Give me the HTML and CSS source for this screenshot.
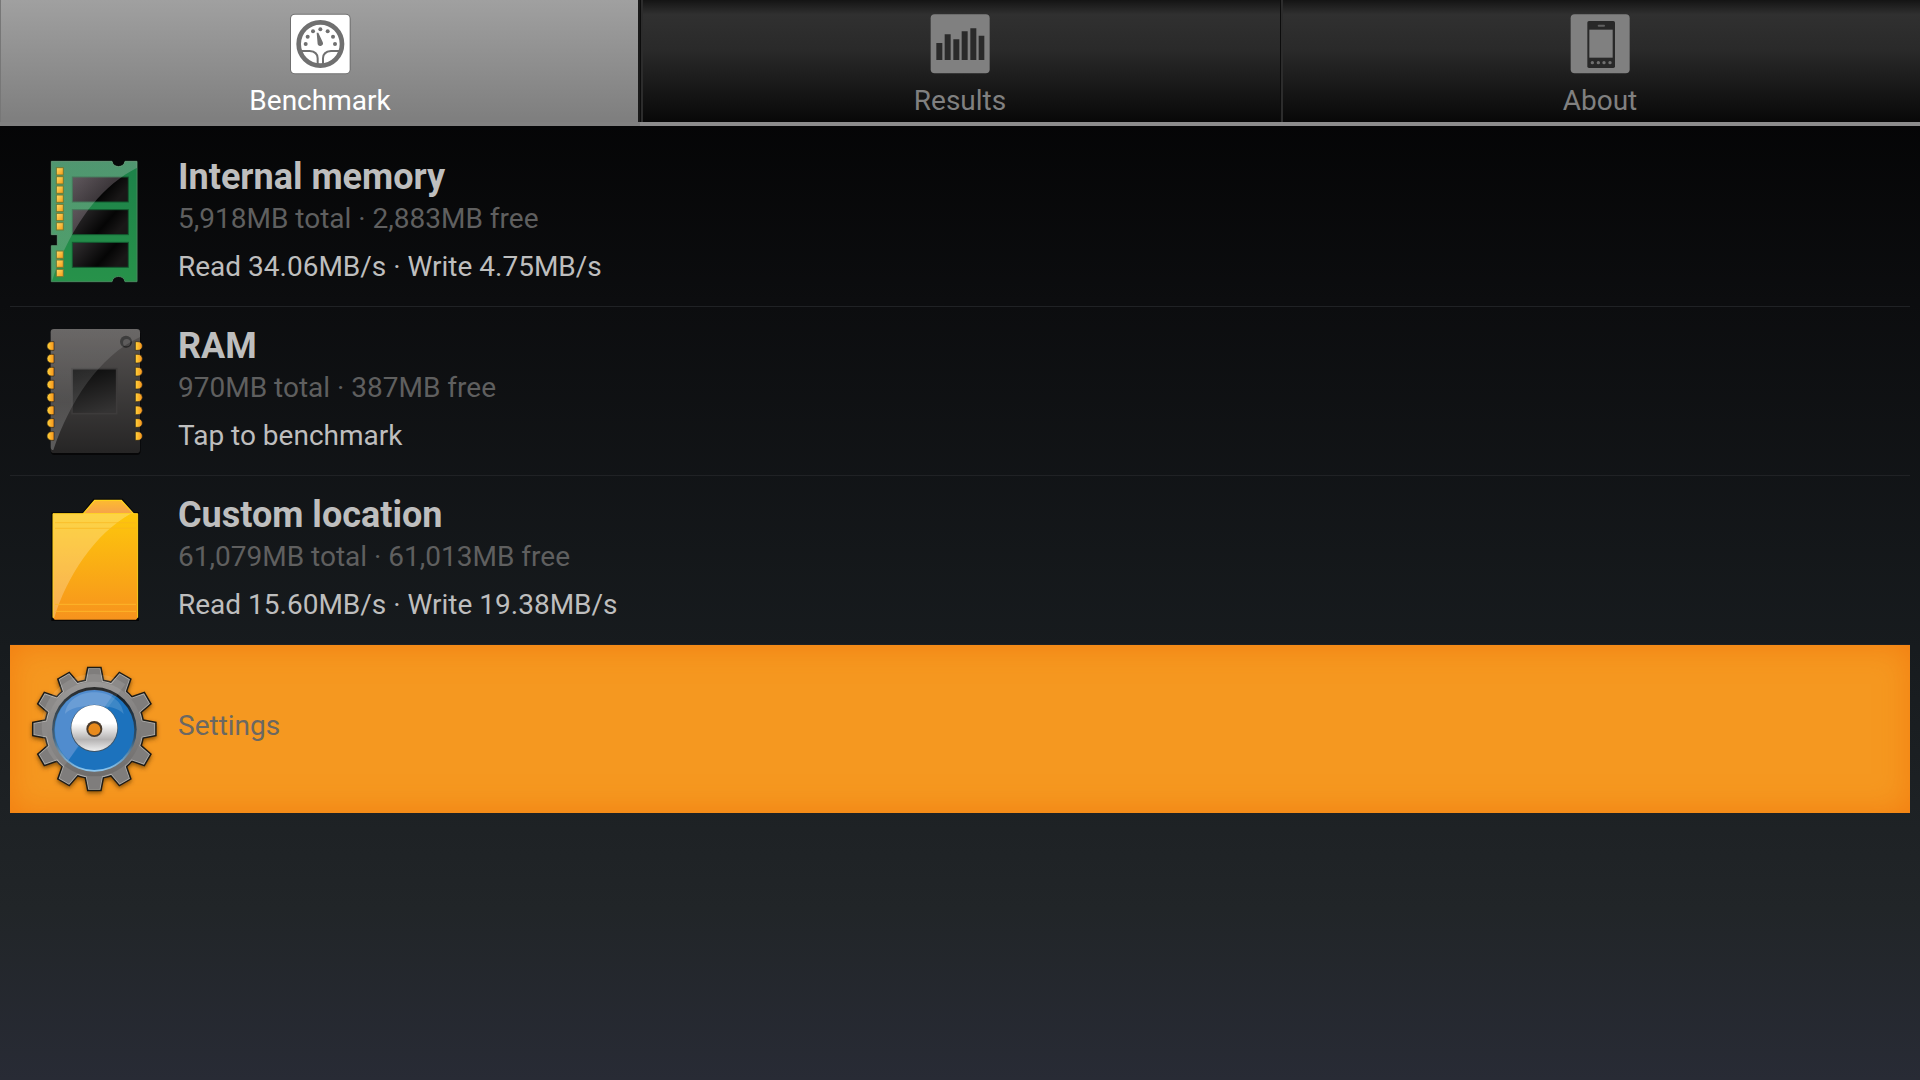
FILE: index.html
```html
<!DOCTYPE html>
<html lang="en">
<head>
    <meta charset="UTF-8">
    <meta name="viewport" content="width=device-width, initial-scale=1.0">
    <title>Benchmark</title>
    <link rel="stylesheet" href="styles.css">
</head>
<body>

<nav class="tabs">
    <button type="button" class="tab active">
        <svg class="tab-icon" viewBox="200 30 198 198" aria-hidden="true">
            <rect x="209" y="41" width="182" height="182" rx="15" fill="#6f6f6f"/>
            <rect x="212" y="44" width="176" height="176" rx="12" fill="#fff"/>
            <circle cx="300" cy="132" r="65" fill="none" stroke="#707070" stroke-width="14"/>
            <g fill="#707070">
                <circle cx="256" cy="132" r="6"/>
                <circle cx="262" cy="110" r="6"/>
                <circle cx="278" cy="94" r="6"/>
                <circle cx="300" cy="88" r="6"/>
                <circle cx="322" cy="94" r="6"/>
                <circle cx="338" cy="110" r="6"/>
                <circle cx="344" cy="132" r="6"/>
                <path d="M289 98 L294 98 L307 126 A8 8 0 1 1 292 133 Z"/>
            </g>
            <path d="M243 153 H268 Q292 155 292 175 V192 M357 153 H332 Q308 155 308 175 V192" fill="none" stroke="#707070" stroke-width="6"/>
        </svg>
        <span>Benchmark</span>
    </button>
    <button type="button" class="tab">
        <svg class="tab-icon" viewBox="200 30 198 198" aria-hidden="true">
            <rect x="211" y="43" width="177" height="177" rx="12" fill="#808080"/>
            <path d="M228 129h18v51h-18z M253 103h18v77h-18z M279 118h18v62h-18z M304 94h18v86h-18z M330 85h18v95h-18z M355 107h17v73h-17z" fill="#2a2a2a"/>
        </svg>
        <span>Results</span>
    </button>
    <button type="button" class="tab">
        <svg class="tab-icon" viewBox="200 30 198 198" aria-hidden="true">
            <rect x="211" y="43" width="177" height="177" rx="12" fill="#808080"/>
            <rect x="261" y="63" width="83" height="141" rx="5" fill="#282828"/>
            <rect x="267" y="89" width="70" height="84" fill="#808080"/>
            <rect x="292" y="74" width="22" height="6" rx="3" fill="#606060"/>
            <g fill="#707070">
                <circle cx="276" cy="188" r="5"/>
                <circle cx="294" cy="188" r="5"/>
                <circle cx="311" cy="188" r="5"/>
                <circle cx="329" cy="188" r="5"/>
            </g>
        </svg>
        <span>About</span>
    </button>
</nav>

<main class="list">
    <button type="button" class="item">
        <svg class="item-icon" viewBox="-60 -21 504 504" aria-hidden="true">
            <defs>
                <linearGradient id="chip" x1="0" y1="0" x2="1" y2="0.4">
                    <stop offset="0" stop-color="#333032"/>
                    <stop offset="0.7" stop-color="#050505"/>
                    <stop offset="1" stop-color="#191717"/>
                </linearGradient>
                <linearGradient id="pins" x1="0" y1="0" x2="1" y2="1">
                    <stop offset="0" stop-color="#ffdc68"/>
                    <stop offset="1" stop-color="#f79a14"/>
                </linearGradient>
                <linearGradient id="board" x1="0" y1="0" x2="0" y2="1">
                    <stop offset="0" stop-color="#1c8149"/>
                    <stop offset="1" stop-color="#27924a"/>
                </linearGradient>
                <linearGradient id="shine" x1="0" y1="0" x2="0" y2="1">
                    <stop offset="0" stop-color="#f4dcec" stop-opacity="0.24"/>
                    <stop offset="1" stop-color="#f4dcec" stop-opacity="0.2"/>
                </linearGradient>
            </defs>
            <path d="M64 49 H246 A20 20 0 0 0 285 49 H321 V410 H285 A20 20 0 0 0 246 410 H64 V302 H82 V269 H64 Z" fill="url(#board)" stroke="#48895e" stroke-width="3"/>
            <g fill="url(#chip)" stroke="#135c30" stroke-width="3">
                <rect x="127" y="96" width="168" height="75"/>
                <rect x="127" y="194" width="168" height="75"/>
                <rect x="127" y="292" width="168" height="75"/>
            </g>
            <path d="M64 49 H246 A20 20 0 0 0 285 49 H321 V68 C200 130 115 260 66 408 L64 302 H82 V269 H64 Z" fill="url(#shine)"/>
            <g fill="url(#pins)" stroke="#6f7a35" stroke-width="3">
                <rect x="79" y="68" width="21" height="22"/>
                <rect x="79" y="95" width="21" height="22"/>
                <rect x="79" y="123" width="21" height="22"/>
                <rect x="79" y="150" width="21" height="22"/>
                <rect x="79" y="178" width="21" height="22"/>
                <rect x="79" y="205" width="21" height="22"/>
                <rect x="79" y="233" width="21" height="22"/>
                <rect x="79" y="318" width="21" height="22"/>
                <rect x="79" y="345" width="21" height="22"/>
                <rect x="79" y="373" width="21" height="22"/>
            </g>
        </svg>
        <span class="item-text">
            <span class="title">Internal memory</span>
            <span class="space">5,918MB total · 2,883MB free</span>
            <span class="speed">Read 34.06MB/s · Write 4.75MB/s</span>
        </span>
    </button>

    <button type="button" class="item">
        <svg class="item-icon" viewBox="-60 -24 504 504" aria-hidden="true">
            <defs>
                <linearGradient id="body" x1="0" y1="0" x2="0" y2="1">
                    <stop offset="0" stop-color="#565352"/>
                    <stop offset="1" stop-color="#262525"/>
                </linearGradient>
                <linearGradient id="core" x1="0.3" y1="0" x2="0.6" y2="1">
                    <stop offset="0" stop-color="#0c0c0c"/>
                    <stop offset="1" stop-color="#343333"/>
                </linearGradient>
                <linearGradient id="gloss" x1="0" y1="0" x2="0" y2="1">
                    <stop offset="0" stop-color="#fff" stop-opacity="0.12"/>
                    <stop offset="0.6" stop-color="#fff" stop-opacity="0.12"/>
                    <stop offset="1" stop-color="#fff" stop-opacity="0.25"/>
                </linearGradient>
                <linearGradient id="legs" x1="0" y1="0" x2="1" y2="0">
                    <stop offset="0" stop-color="#ffd23a"/>
                    <stop offset="1" stop-color="#f7941d"/>
                </linearGradient>
            </defs>
            <rect x="62" y="44" width="270" height="376" rx="12" fill="#070708"/>
            <rect x="62" y="42" width="268" height="372" rx="10" fill="url(#body)"/>
            <rect x="126" y="161" width="134" height="135" fill="url(#core)" stroke="#3d3b3b" stroke-width="5"/>
            <circle cx="288" cy="80" r="18" fill="#232323"/>
            <circle cx="290" cy="83" r="11" fill="#484646"/>
            <path d="M72 42 H320 Q330 42 330 52 V66 C205 125 120 260 70 405 Q62 405 62 395 V52 Q62 42 72 42 Z" fill="url(#gloss)"/>
            <g fill="url(#legs)" stroke="#2a2418" stroke-width="2">
                <path d="M72 80v26h-8a13 13 0 0 1 0-26z"/>
                <path d="M72 118v26h-8a13 13 0 0 1 0-26z"/>
                <path d="M72 157v26h-8a13 13 0 0 1 0-26z"/>
                <path d="M72 196v26h-8a13 13 0 0 1 0-26z"/>
                <path d="M72 234v26h-8a13 13 0 0 1 0-26z"/>
                <path d="M72 273v26h-8a13 13 0 0 1 0-26z"/>
                <path d="M72 311v26h-8a13 13 0 0 1 0-26z"/>
                <path d="M72 350v26h-8a13 13 0 0 1 0-26z"/>
                <path d="M316 80v26h8a13 13 0 0 0 0-26z"/>
                <path d="M316 118v26h8a13 13 0 0 0 0-26z"/>
                <path d="M316 157v26h8a13 13 0 0 0 0-26z"/>
                <path d="M316 196v26h8a13 13 0 0 0 0-26z"/>
                <path d="M316 234v26h8a13 13 0 0 0 0-26z"/>
                <path d="M316 273v26h8a13 13 0 0 0 0-26z"/>
                <path d="M316 311v26h8a13 13 0 0 0 0-26z"/>
                <path d="M316 350v26h8a13 13 0 0 0 0-26z"/>
            </g>
        </svg>
        <span class="item-text">
            <span class="title">RAM</span>
            <span class="space">970MB total · 387MB free</span>
            <span class="speed">Tap to benchmark</span>
        </span>
    </button>

    <button type="button" class="item">
        <svg class="item-icon" viewBox="-60 -27 504 504" aria-hidden="true">
            <defs>
                <linearGradient id="folder" x1="0" y1="0" x2="0" y2="1">
                    <stop offset="0" stop-color="#fdc70c"/>
                    <stop offset="1" stop-color="#f7931d"/>
                </linearGradient>
                <linearGradient id="flap" x1="0" y1="0" x2="0" y2="1">
                    <stop offset="0" stop-color="#fdbb30"/>
                    <stop offset="1" stop-color="#f6a24a"/>
                </linearGradient>
            </defs>
            <path d="M64 82 H158 L190 41 H278 L312 82 H327 V408 H64 Z" fill="#050506"/>
            <path d="M160 86 L194 46 H274 L310 86 Z" fill="url(#flap)" stroke="#ffd21f" stroke-width="4"/>
            <path d="M69 86 H323 V398 L318 404 H74 L69 398 Z" fill="url(#folder)"/>
            <path d="M69 86 H302 C195 145 110 275 73 398 L69 398 Z" fill="#fff" fill-opacity="0.24"/>
            <path d="M75 113 H318 M75 130 H318" stroke="#f9b51c" stroke-width="2"/>
            <path d="M75 358 H318 M75 379 H318" stroke="#fdb52a" stroke-width="3"/>
            <path d="M69 398 V86 H162 M308 86 H323 V398" fill="none" stroke="#ffd21f" stroke-width="3"/>
        </svg>
        <span class="item-text">
            <span class="title">Custom location</span>
            <span class="space">61,079MB total · 61,013MB free</span>
            <span class="speed">Read 15.60MB/s · Write 19.38MB/s</span>
        </span>
    </button>

    <button type="button" class="item selected">
        <svg class="item-icon" viewBox="30 15 504 504" aria-hidden="true">
            <defs>
                <linearGradient id="metal" x1="0" y1="0" x2="0" y2="1">
                    <stop offset="0" stop-color="#8f8d8c"/>
                    <stop offset="1" stop-color="#6f6d6c"/>
                </linearGradient>
                <linearGradient id="hub" x1="0" y1="0" x2="0" y2="1">
                    <stop offset="0.4" stop-color="#fff"/>
                    <stop offset="0.75" stop-color="#b5b3b3"/>
                    <stop offset="1" stop-color="#eee"/>
                </linearGradient>
                <linearGradient id="rim" x1="0" y1="0" x2="0" y2="1">
                    <stop offset="0" stop-color="#111"/>
                    <stop offset="0.6" stop-color="#30516c"/>
                    <stop offset="1" stop-color="#8ecbf5"/>
                </linearGradient>
                <filter id="shadow" x="-20%" y="-20%" width="140%" height="140%">
                    <feDropShadow dx="0" dy="6" stdDeviation="6" flood-color="#5a3000" flood-opacity="0.7"/>
                </filter>
                <path id="tooth" d="M-24 -138 L-16 -180 H16 L24 -138 Z"/>
                <g id="gear">
                    <circle cx="283" cy="267" r="144"/>
                    <g transform="translate(283 267)">
                        <use href="#tooth"/>
                        <use href="#tooth" transform="rotate(30)"/>
                        <use href="#tooth" transform="rotate(60)"/>
                        <use href="#tooth" transform="rotate(90)"/>
                        <use href="#tooth" transform="rotate(120)"/>
                        <use href="#tooth" transform="rotate(150)"/>
                        <use href="#tooth" transform="rotate(180)"/>
                        <use href="#tooth" transform="rotate(210)"/>
                        <use href="#tooth" transform="rotate(240)"/>
                        <use href="#tooth" transform="rotate(270)"/>
                        <use href="#tooth" transform="rotate(300)"/>
                        <use href="#tooth" transform="rotate(330)"/>
                    </g>
                </g>
            </defs>
            <g filter="url(#shadow)">
                <use href="#gear" fill="#1e1a17" stroke="#1e1a17" stroke-width="14"/>
            </g>
            <use href="#gear" fill="#b0aeac" stroke="#b0aeac" stroke-width="5"/>
            <use href="#gear" fill="#7f7d7c"/>
            <circle cx="283" cy="267" r="142" fill="url(#metal)"/>
            <circle cx="283" cy="268" r="127" fill="url(#rim)"/>
            <circle cx="283" cy="270" r="120" fill="#1c72bd"/>
            <path d="M376 133 L188 384 A144 144 0 0 1 376 133 Z" fill="#fff" fill-opacity="0.1"/>
            <path d="M340 163 L206 360 A120 120 0 0 1 340 163 Z" fill="#b9b5f5" fill-opacity="0.22"/>
            <path d="M195 222 C205 135 361 135 371 222 C345 188 221 188 195 222 Z" fill="#fff" fill-opacity="0.15"/>
            <circle cx="283" cy="265" r="71" fill="#3d5366"/>
            <circle cx="283" cy="264" r="69" fill="url(#hub)"/>
            <circle cx="283" cy="267" r="24" fill="#4a3a2a"/>
            <circle cx="283" cy="268" r="18" fill="#e88a1c"/>
        </svg>
        <span class="label">Settings</span>
    </button>
</main>

</body>
</html>
```
FILE: styles.css
```css
* {
    box-sizing: border-box;
}
html {
    min-height: 100%;
    background: linear-gradient(#000 0%, #0c0d0f 28%, #171b1e 60%, #212528 84%, #282b35 100%);
}
body {
    margin: 0;
    font-family: Roboto, "Noto Sans", sans-serif;
    font-size: 28px;
    line-height: 34px;
    color: #bebebe;
}
button {
    margin: 0;
    padding: 0;
    border: none;
    background: none;
    font: inherit;
    color: inherit;
    text-align: left;
    cursor: pointer;
}
.tabs {
    display: flex;
}
.tab {
    flex: 1;
    display: flex;
    flex-direction: column;
    align-items: center;
    gap: 8px;
    padding: 10px 0 4px;
    color: #808080;
    background: linear-gradient(#141414 0%, #303030 12%, #2a2a2a 40%, #080808 100%);
    border-bottom: 4px solid #8c8c8c;
    box-shadow: inset 1px 0 #0c0c0c, inset 3px 0 #2c2c2c;
}
.tab.active {
    color: #fff;
    background: linear-gradient(#a0a0a0, #7e7e7e);
    border-bottom-color: #808080;
    box-shadow: inset 1px 0 #777, inset -2px 0 #1a1a1a;
}
.tab-icon {
    width: 66px;
    height: 66px;
}
.list {
    padding: 12px 10px;
}
.item {
    display: flex;
    width: 100%;
    border-bottom: 1px solid #202225;
}
.item-icon {
    flex: none;
    width: 168px;
    height: 168px;
}
.item-text {
    display: flex;
    flex-direction: column;
    padding-top: 14px;
}
.title {
    font-size: 36px;
    font-weight: bold;
    line-height: 50px;
}
.space {
    color: #5f5f5f;
}
.speed {
    margin-top: 14px;
}
.item.selected {
    align-items: center;
    border-bottom: none;
    background-color: #f59820;
    box-shadow: inset 0 0 32px #f37d10;
}
.label {
    padding-bottom: 6px;
    color: #6b6862;
}
```
